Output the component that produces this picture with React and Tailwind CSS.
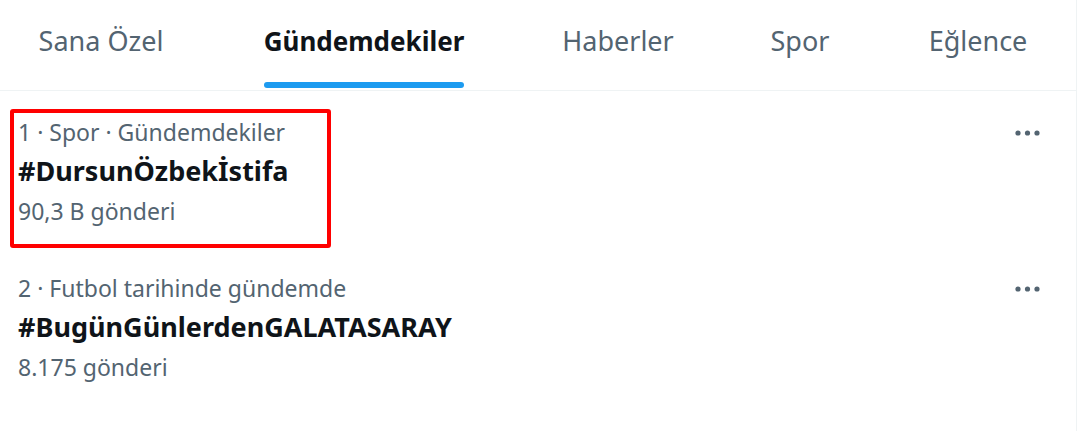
import React from 'react'

const tabs = [
   { label: 'Sana Özel', active: false, w: 'w-[202px]' },
   { label: 'Gündemdekiler', active: true, w: 'w-[324px]' },
   { label: 'Haberler', active: false, w: 'w-[184px]' },
   { label: 'Spor', active: false, w: 'w-[180px]' },
   { label: 'Eğlence', active: false, w: 'w-[176px]' },
]

const trends = [
   { meta: '1 · Spor · Gündemdekiler', tag: '#DursunÖzbekİstifa', count: '90,3 B gönderi' },
   { meta: '2 · Futbol tarihinde gündemde', tag: '#BugünGünlerdenGALATASARAY', count: '8.175 gönderi' },
]

const Dots = () => (
   <svg width="28" height="8" viewBox="0 0 28 8" className="text-[#536471]">
      <circle cx="4" cy="4" r="2.6" fill="currentColor" />
      <circle cx="13.5" cy="4" r="2.6" fill="currentColor" />
      <circle cx="23" cy="4" r="2.6" fill="currentColor" />
   </svg>
)

const App = () => {
   return (
      <div
         className="relative w-[1077px] h-[431px] bg-white border-r border-[#eff3f4] overflow-hidden"
         style={{ fontFamily: '"Noto Sans", "Open Sans", sans-serif' }}
      >
         <nav className="flex h-[91px] border-b border-[#eff3f4]">
            {tabs.map((t) => (
               <div key={t.label} className={`${t.w} flex justify-center shrink-0`}>
                  <div className="relative pt-[22px]">
                     <span
                        className={
                           t.active
                              ? 'text-[26px] leading-[38px] font-bold text-[#0f1419]'
                              : 'text-[27px] leading-[38px] text-[#536471]'
                        }
                     >
                        {t.label}
                     </span>
                     {t.active && (
                        <div className="absolute left-0 right-0 top-[82px] h-[6px] rounded-full bg-[#1d9bf0]" />
                     )}
                  </div>
               </div>
            ))}
         </nav>

         <div className="pt-[22px]">
            {trends.map((t, i) => (
               <div key={i} className="flex justify-between pl-[18px] pr-[34px] mb-[38px]">
                  <div className="flex flex-col">
                     <span className="text-[23px] leading-[38px] text-[#536471]">{t.meta}</span>
                     <span className="text-[27px] leading-[40px] font-bold text-[#0f1419]">{t.tag}</span>
                     <span className="text-[23px] leading-[40px] text-[#536471]">{t.count}</span>
                  </div>
                  <div className="pt-[16px]">
                     <Dots />
                  </div>
               </div>
            ))}
         </div>

         <div className="absolute left-[10px] top-[109px] w-[321px] h-[139px] border-[4px] border-[#ff0000] rounded-[3px]" />
      </div>
   )
}

export default App
